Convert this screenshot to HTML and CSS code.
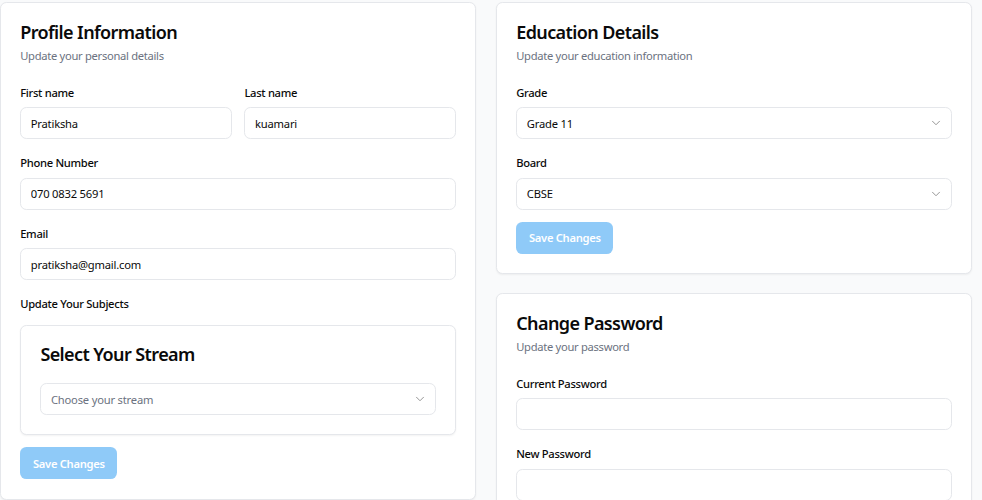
FILE: index.html
```html
<!DOCTYPE html>
<html lang="en">
<head>
<meta charset="utf-8">
<title>Settings</title>
<link rel="stylesheet" href="styles.css">
</head>
<body>
<main class="page">
  <section class="card">
    <header class="card-header">
      <h2 class="card-title">Profile Information</h2>
      <p class="card-desc">Update your personal details</p>
    </header>
    <form class="card-content">
      <div class="row">
        <div class="field">
          <label class="label">First name</label>
          <input class="input" type="text" value="Pratiksha">
        </div>
        <div class="field">
          <label class="label">Last name</label>
          <input class="input" type="text" value="kuamari">
        </div>
      </div>
      <div class="field">
        <label class="label">Phone Number</label>
        <input class="input" type="text" value="070 0832 5691">
      </div>
      <div class="field">
        <label class="label">Email</label>
        <input class="input" type="text" value="pratiksha@gmail.com">
      </div>
      <div class="field">
        <label class="label label-subjects">Update Your Subjects</label>
        <div class="inner-card">
          <h3 class="card-title inner-title">Select Your Stream</h3>
          <div class="select placeholder">
            <span>Choose your stream</span>
            <svg class="chev" viewBox="0 0 24 24" fill="none" stroke="currentColor" stroke-width="1.6" stroke-linecap="round" stroke-linejoin="round"><path d="m6 9 6 6 6-6"/></svg>
          </div>
        </div>
      </div>
      <div class="actions">
        <button class="btn" type="button" disabled>Save Changes</button>
      </div>
    </form>
  </section>

  <div class="col">
    <section class="card">
      <header class="card-header">
        <h2 class="card-title">Education Details</h2>
        <p class="card-desc">Update your education information</p>
      </header>
      <form class="card-content">
        <div class="field">
          <label class="label">Grade</label>
          <div class="select">
            <span>Grade 11</span>
            <svg class="chev" viewBox="0 0 24 24" fill="none" stroke="currentColor" stroke-width="1.6" stroke-linecap="round" stroke-linejoin="round"><path d="m6 9 6 6 6-6"/></svg>
          </div>
        </div>
        <div class="field">
          <label class="label">Board</label>
          <div class="select">
            <span>CBSE</span>
            <svg class="chev" viewBox="0 0 24 24" fill="none" stroke="currentColor" stroke-width="1.6" stroke-linecap="round" stroke-linejoin="round"><path d="m6 9 6 6 6-6"/></svg>
          </div>
        </div>
        <div class="actions">
          <button class="btn" type="button" disabled>Save Changes</button>
        </div>
      </form>
    </section>

    <section class="card">
      <header class="card-header">
        <h2 class="card-title">Change Password</h2>
        <p class="card-desc">Update your password</p>
      </header>
      <form class="card-content">
        <div class="field">
          <label class="label">Current Password</label>
          <input class="input" type="password">
        </div>
        <div class="field">
          <label class="label">New Password</label>
          <input class="input" type="password">
        </div>
      </form>
    </section>
  </div>
</main>
</body>
</html>
```

FILE: styles.css
```css
* { box-sizing: border-box; }

html, body {
  margin: 0;
  padding: 0;
  background: #f9fafb;
  font-family: "Noto Sans", "Open Sans", sans-serif;
  color: #0a0a0a;
}

.page {
  display: grid;
  grid-template-columns: 1fr 1fr;
  column-gap: 20px;
  align-items: start;
  padding: 2px 10px 0 0;
}

.col {
  display: flex;
  flex-direction: column;
  gap: 19.2px;
}

.card {
  background: #fff;
  border: 1px solid #e5e7eb;
  border-radius: 6.4px;
  box-shadow: 0 1px 2px rgba(0, 0, 0, 0.05);
}

.card-header {
  padding: 20.2px 19.2px 17.2px;
}

.card-title {
  margin: 0;
  font-size: 18px;
  line-height: 19.2px;
  font-weight: 600;
  letter-spacing: -0.6px;
}

.card-desc {
  margin: 5.8px 0 0;
  font-size: 11.2px;
  line-height: 16px;
  color: #6b7280;
  letter-spacing: -0.3px;
}

.card-content {
  display: flex;
  flex-direction: column;
  gap: 16px;
  padding: 3.6px 19.2px 19.2px;
}

.row {
  display: grid;
  grid-template-columns: 1fr 1fr;
  gap: 12.8px;
}

.field {
  display: flex;
  flex-direction: column;
}

.label {
  display: block;
  font-size: 11.2px;
  line-height: 16px;
  font-weight: 500;
  letter-spacing: -0.3px;
  margin-bottom: 6.4px;
}

.label-subjects {
  margin-bottom: 13px;
}

.input,
.select {
  width: 100%;
  height: 32px;
  border: 1px solid #e5e7eb;
  border-radius: 6.4px;
  background: #fff;
  padding: 0 8px 0 9.6px;
  font-family: inherit;
  font-size: 11.2px;
  letter-spacing: -0.2px;
  color: #0a0a0a;
  outline: none;
}

.select {
  display: flex;
  align-items: center;
  justify-content: space-between;
}

.select.placeholder span {
  color: #6b7280;
}

.chev {
  width: 14px;
  height: 14px;
  color: #0a0a0a;
  opacity: 0.45;
  flex: none;
}

.inner-card {
  border: 1px solid #e5e7eb;
  border-radius: 6.4px;
  background: #fff;
  box-shadow: 0 1px 2px rgba(0, 0, 0, 0.05);
  padding: 19.2px;
}

.inner-title {
  margin-bottom: 18.6px;
}

.actions {
  display: flex;
  margin-top: -4px;
}

.btn {
  height: 32px;
  padding: 0 12.8px;
  border: 0;
  border-radius: 6.4px;
  background: #2196f3;
  opacity: 0.5;
  color: #fff;
  font-family: inherit;
  font-size: 11.2px;
  font-weight: 600;
  letter-spacing: -0.3px;
}
```
